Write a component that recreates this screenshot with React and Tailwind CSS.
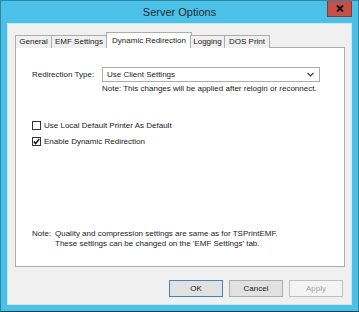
export default function App() {
  const tabs = [
    { label: 'General', w: 'w-[37px]' },
    { label: 'EMF Settings', w: 'w-[56px]' },
    { label: 'Dynamic Redirection', w: 'w-[86px]', active: true },
    { label: 'Logging', w: 'w-[35px]' },
    { label: 'DOS Print', w: 'w-[46px]' },
  ];

  return (
    <div className="w-[359px] h-[312px] bg-[#4cc1e7] border border-[#2f86a8] border-b-[#1d3a47] flex flex-col font-['Liberation_Sans',Arial,sans-serif] text-[8px] text-[#1a1a1a] relative">
      {/* TITLE BAR */}
      <div className="h-[22px] flex items-center justify-center text-[11px] text-[#1e2a30] pt-[1px]">
        Server Options
      </div>
      <div className="absolute top-0 right-[6px] w-[25px] h-[16px] bg-[#c65048] border border-[#8a3a36] border-t-0 flex items-center justify-center">
        <svg width="8" height="7" viewBox="0 0 8 7">
          <path d="M1 0.5 L7 6.5 M7 0.5 L1 6.5" stroke="#111" strokeWidth="2" />
        </svg>
      </div>

      {/* CLIENT AREA */}
      <div className="mx-[6px] h-[282px] bg-[#f0f0f0] border border-[#c9e7f4] flex flex-col pt-[8px] pl-[7px] pr-[6px]">
        {/* TABS */}
        <div className="flex items-end h-[16px] relative z-10">
          {tabs.map((t) =>
            t.active ? (
              <div
                key={t.label}
                className={`${t.w} h-[16px] bg-white border border-[#acacac] border-b-0 flex items-start justify-center pt-[2px] -ml-[1px] -mr-[1px]`}
              >
                {t.label}
              </div>
            ) : (
              <div
                key={t.label}
                className={`${t.w} h-[13px] bg-[#f0f0f0] border border-[#acacac] border-b-0 -ml-[1px] first:ml-0 flex items-center justify-center`}
              >
                {t.label}
              </div>
            )
          )}
        </div>

        {/* PANEL */}
        <div className="-mt-[1px] h-[220px] bg-white border border-[#acacac] flex flex-col pl-[16px]">
          <div className="mt-[19px] flex items-center h-[15px]">
            <span className="w-[70px]">Redirection Type:</span>
            <div className="w-[218px] h-[15px] border border-[#acacac] bg-white flex items-center justify-between pl-[4px] pr-[5px]">
              <span>Use Client Settings</span>
              <svg width="7" height="5" viewBox="0 0 7 5">
                <path d="M0.5 0.8 L3.5 3.8 L6.5 0.8" fill="none" stroke="#333" strokeWidth="1.2" />
              </svg>
            </div>
          </div>
          <div className="ml-[70px] mt-[2px] leading-[10px]">
            Note: This changes will be applied after relogin or reconnect.
          </div>

          <div className="mt-[26px] flex items-center gap-[3px] h-[11px]">
            <div className="w-[9px] h-[9px] border border-[#333] bg-white" />
            <span>Use Local Default Printer As Default</span>
          </div>
          <div className="mt-[5px] flex items-center gap-[3px] h-[11px]">
            <div className="w-[9px] h-[9px] border border-[#333] bg-white flex items-center justify-center">
              <svg width="7" height="7" viewBox="0 0 7 7">
                <path d="M0.8 3.6 L2.6 5.6 L6.2 1" fill="none" stroke="#111" strokeWidth="1.5" />
              </svg>
            </div>
            <span>Enable Dynamic Redirection</span>
          </div>

          <div className="mt-auto mb-[17px] flex leading-[10px]">
            <span className="w-[23px]">Note:</span>
            <div className="flex flex-col">
              <span>Quality and compression settings are same as for TSPrintEMF.</span>
              <span>These settings can be changed on the 'EMF Settings' tab.</span>
            </div>
          </div>
        </div>

        {/* BUTTONS */}
        <div className="mt-[13px] flex justify-end gap-[6px] pr-[2px]">
          <button className="w-[54px] h-[17px] bg-[#e1e1e1] border border-[#3d84c1] flex items-center justify-center">
            OK
          </button>
          <button className="w-[54px] h-[17px] bg-[#e1e1e1] border border-[#adadad] flex items-center justify-center">
            Cancel
          </button>
          <button className="w-[54px] h-[17px] bg-[#f4f4f4] border border-[#bfbfbf] text-[#a3a3a3] flex items-center justify-center">
            Apply
          </button>
        </div>
      </div>
    </div>
  );
}
